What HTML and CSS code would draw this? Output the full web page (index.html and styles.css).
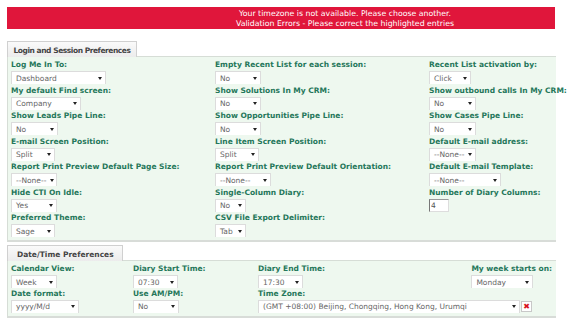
FILE: index.html
```html
<!DOCTYPE html>
<html lang="en">
  <head>
    <meta charset="UTF-8" />
    <meta name="viewport" content="width=device-width, initial-scale=1.0" />
    <title>Preferences</title>
    <link rel="stylesheet" href="styles.css">
  </head>
  <body>
    <div class="page">
      <div class="error-banner">
        <p>Your timezone is not available. Please choose another.</p>
        <p>Validation Errors - Please correct the highlighted entries</p>
      </div>

      <div class="section">
        <div class="tab tab-login">Login and Session Preferences</div>
        <div class="panel">
          <div class="grid grid-login">
            <div class="field">
              <label>Log Me In To:</label>
              <span class="select w95"><span>Dashboard</span><i class="arrow"></i></span>
            </div>
            <div class="field">
              <label>Empty Recent List for each session:</label>
              <span class="select w46"><span>No</span><i class="arrow"></i></span>
            </div>
            <div class="field">
              <label>Recent List activation by:</label>
              <span class="select w42"><span>Click</span><i class="arrow"></i></span>
            </div>

            <div class="field">
              <label>My default Find screen:</label>
              <span class="select w70"><span>Company</span><i class="arrow"></i></span>
            </div>
            <div class="field">
              <label>Show Solutions In My CRM:</label>
              <span class="select w46"><span>No</span><i class="arrow"></i></span>
            </div>
            <div class="field">
              <label>Show outbound calls In My CRM:</label>
              <span class="select w47"><span>No</span><i class="arrow"></i></span>
            </div>

            <div class="field">
              <label>Show Leads Pipe Line:</label>
              <span class="select w47"><span>No</span><i class="arrow"></i></span>
            </div>
            <div class="field">
              <label>Show Opportunities Pipe Line:</label>
              <span class="select w46"><span>No</span><i class="arrow"></i></span>
            </div>
            <div class="field">
              <label>Show Cases Pipe Line:</label>
              <span class="select w47"><span>No</span><i class="arrow"></i></span>
            </div>

            <div class="field">
              <label>E-mail Screen Position:</label>
              <span class="select w44"><span>Split</span><i class="arrow"></i></span>
            </div>
            <div class="field">
              <label>Line Item Screen Position:</label>
              <span class="select w44"><span>Split</span><i class="arrow"></i></span>
            </div>
            <div class="field">
              <label>Default E-mail address:</label>
              <span class="select w47"><span>--None--</span><i class="arrow"></i></span>
            </div>

            <div class="field">
              <label>Report Print Preview Default Page Size:</label>
              <span class="select w46"><span>--None--</span><i class="arrow"></i></span>
            </div>
            <div class="field">
              <label>Report Print Preview Default Orientation:</label>
              <span class="select w56"><span>--None--</span><i class="arrow"></i></span>
            </div>
            <div class="field">
              <label>Default E-mail Template:</label>
              <span class="select w72"><span>--None--</span><i class="arrow"></i></span>
            </div>

            <div class="field">
              <label>Hide CTI On Idle:</label>
              <span class="select w46"><span>Yes</span><i class="arrow"></i></span>
            </div>
            <div class="field">
              <label>Single-Column Diary:</label>
              <span class="select w31"><span>No</span><i class="arrow"></i></span>
            </div>
            <div class="field">
              <label>Number of Diary Columns:</label>
              <input class="num-input" type="text" value="4" />
            </div>

            <div class="field">
              <label>Preferred Theme:</label>
              <span class="select w44"><span>Sage</span><i class="arrow"></i></span>
            </div>
            <div class="field">
              <label>CSV File Export Delimiter:</label>
              <span class="select w31"><span>Tab</span><i class="arrow"></i></span>
            </div>
            <div class="field"></div>
          </div>
        </div>
      </div>

      <div class="section section-date">
        <div class="tab">Date/Time Preferences</div>
        <div class="panel">
          <div class="grid grid-date">
            <div class="field">
              <label>Calendar View:</label>
              <span class="select w46"><span>Week</span><i class="arrow"></i></span>
            </div>
            <div class="field">
              <label>Diary Start Time:</label>
              <span class="select w45"><span>07:30</span><i class="arrow"></i></span>
            </div>
            <div class="field">
              <label>Diary End Time:</label>
              <span class="select w45"><span>17:30</span><i class="arrow"></i></span>
            </div>
            <div class="field field-right">
              <label>My week starts on:</label>
              <span class="select w62"><span>Monday</span><i class="arrow"></i></span>
            </div>

            <div class="field">
              <label>Date format:</label>
              <span class="select w68"><span>yyyy/M/d</span><i class="arrow"></i></span>
            </div>
            <div class="field">
              <label>Use AM/PM:</label>
              <span class="select w46"><span>No</span><i class="arrow"></i></span>
            </div>
            <div class="field field-wide">
              <label>Time Zone:</label>
              <div class="tz-row">
                <span class="select w262"><span>(GMT +08:00) Beijing, Chongqing, Hong Kong, Urumqi</span><i class="arrow"></i></span>
                <span class="clear-btn">&#x2716;</span>
              </div>
            </div>
          </div>
        </div>
      </div>
    </div>
  </body>
</html>
```

FILE: styles.css
```css
* {
  margin: 0;
  padding: 0;
  box-sizing: border-box;
}

body {
  font-family: "DejaVu Sans", Verdana, sans-serif;
  font-size: 7.5px;
  background: #ffffff;
  color: #555;
  width: 574px;
  height: 319px;
  overflow: hidden;
}

.page {
  padding: 7px 0 0 7px;
  width: 574px;
  overflow: hidden;
}

/* Error banner */
.error-banner {
  width: 548px;
  height: 22px;
  background: #e0163b;
  color: #ffffff;
  padding: 2px 0 0 128px;
  font-size: 7.8px;
  line-height: 9.5px;
  text-align: center;
}

/* Tabs and panels */
.section {
  margin-top: 12px;
  width: 549px;
}

.section-date {
  margin-top: 3px;
}

.tab {
  display: inline-block;
  height: 16px;
  padding: 3px 8px 0 9px;
  background: linear-gradient(#fafafa, #ececec);
  border: 1px solid #d0d0d0;
  border-bottom: none;
  color: #444;
  font-weight: bold;
  font-size: 7.5px;
  line-height: 11px;
  white-space: nowrap;
  margin-bottom: -1px;
  position: relative;
}

.tab-login {
  width: 130px;
  padding: 3px 0 0 0;
  text-align: center;
  letter-spacing: -0.45px;
}

.panel {
  background: #eef8ef;
  border-top: 1px solid #d6ddd6;
  border-left: 1px solid #d6ddd6;
  border-bottom: 2px solid #d8dcd8;
  padding: 3px 0 3px 3px;
}

.grid {
  display: grid;
  row-gap: 1.5px;
}

.grid-login {
  grid-template-columns: 204px 214px 1fr;
}

.grid-date {
  grid-template-columns: 122px 125px 1fr auto;
  row-gap: 0.5px;
}

.field {
  display: flex;
  flex-direction: column;
  align-items: flex-start;
  white-space: nowrap;
  min-width: 0;
}

.field-right {
  padding-right: 4px;
}

.field-wide {
  grid-column: span 2;
}

.field label {
  display: block;
  color: #25775a;
  font-weight: bold;
  font-size: 7.5px;
  line-height: 10px;
  height: 10px;
}

/* Fake select boxes */
.select {
  display: flex;
  align-items: center;
  justify-content: space-between;
  height: 13px;
  margin-top: 1px;
  padding: 0 3px 0 4px;
  background: #ffffff;
  border: 1px solid #dcdcdc;
  border-bottom: none;
  color: #666;
  font-size: 7.5px;
  overflow: hidden;
}

.arrow {
  width: 0;
  height: 0;
  border-left: 2.5px solid transparent;
  border-right: 2.5px solid transparent;
  border-top: 3px solid #222;
  flex-shrink: 0;
  margin-left: 4px;
}

.w31 { width: 31px; }
.w42 { width: 42px; }
.w44 { width: 44px; }
.w45 { width: 45px; }
.w46 { width: 46px; }
.w47 { width: 47px; }
.w56 { width: 56px; }
.w62 { width: 62px; }
.w68 { width: 68px; }
.w70 { width: 70px; }
.w72 { width: 72px; }
.w95 { width: 95px; }
.w262 { width: 262px; }

.num-input {
  width: 20px;
  height: 13px;
  margin-top: 1px;
  border: 1px solid #ddd;
  border-left-color: #777;
  border-top-color: #999;
  font-family: "DejaVu Sans", Verdana, sans-serif;
  font-size: 7.5px;
  color: #555;
  padding-left: 1px;
  outline: none;
}

.tz-row {
  display: flex;
  align-items: center;
  gap: 1px;
}

.clear-btn {
  width: 11px;
  height: 11px;
  margin-top: 1px;
  border: 1px solid #c8c8c8;
  background: #ffffff;
  color: #d8141c;
  font-size: 8px;
  line-height: 9px;
  text-align: center;
  font-weight: bold;
}
```
